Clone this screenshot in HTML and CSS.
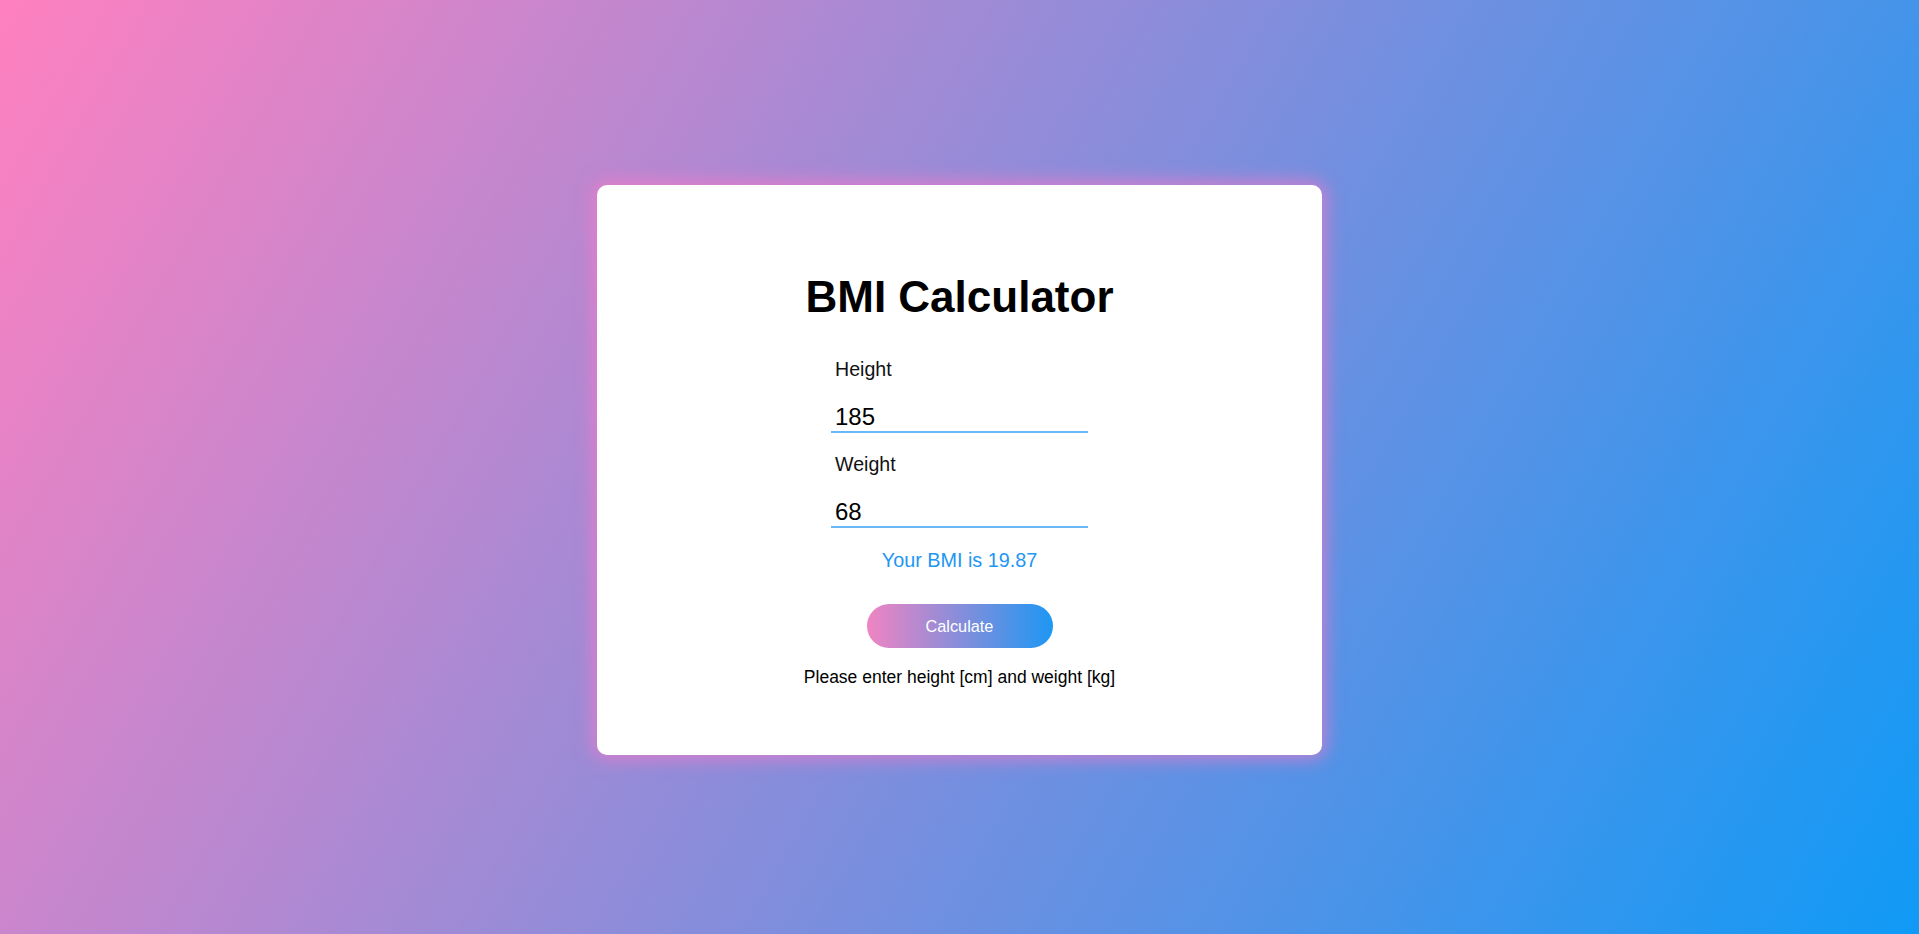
FILE: index.html
```html
<!DOCTYPE html>
<html lang="en">
<head>
<meta charset="utf-8">
<title>BMI Calculator</title>
<link rel="stylesheet" href="styles.css">
</head>
<body>
  <main class="card">
    <h1 class="title">BMI Calculator</h1>
    <form class="form" onsubmit="return false;">
      <label class="label" for="height">Height</label>
      <input class="field" id="height" type="text" value="185">
      <label class="label label-next" for="weight">Weight</label>
      <input class="field" id="weight" type="text" value="68">
    </form>
    <p class="result">Your BMI is 19.87</p>
    <button class="btn" type="button">Calculate</button>
    <p class="hint">Please enter height [cm] and weight [kg]</p>
  </main>
</body>
</html>
```

FILE: styles.css
```css
html, body {
  margin: 0;
  padding: 0;
  height: 100%;
}

body {
  font-family: "Liberation Sans", Arial, sans-serif;
  background: linear-gradient(120deg, #ff80c0 0%, #0f9af6 100%);
  display: flex;
  align-items: center;
  justify-content: center;
  overflow: hidden;
}

.card {
  box-sizing: border-box;
  width: 725px;
  margin-top: 5px;
  padding: 87px 0 68px;
  background: #ffffff;
  border-radius: 10px;
  box-shadow: 0 0 18px 4px rgba(255, 120, 200, 0.65);
  display: flex;
  flex-direction: column;
  align-items: center;
}

.title {
  margin: 0;
  font-size: 44px;
  line-height: 50px;
  font-weight: 700;
  color: #000;
  text-align: center;
}

.form {
  width: 257px;
  margin: 35px 0 0;
  display: flex;
  flex-direction: column;
}

.label {
  display: block;
  font-size: 19.6px;
  line-height: 24px;
  height: 24px;
  padding-left: 4px;
  color: #111;
}

.label-next {
  margin-top: 19px;
}

.field {
  box-sizing: border-box;
  display: block;
  width: 257px;
  height: 31px;
  margin-top: 21px;
  padding: 1px 0 0 4px;
  border: none;
  border-bottom: 2px solid #6ab8f7;
  outline: none;
  background: transparent;
  font-family: "Liberation Sans", Arial, sans-serif;
  font-size: 24px;
  line-height: 28px;
  color: #000;
}

.result {
  margin: 20px 0 0;
  font-size: 19.8px;
  line-height: 24px;
  color: #2196f3;
  text-align: center;
}

.btn {
  margin-top: 32px;
  width: 186px;
  height: 44px;
  border: none;
  border-radius: 22px;
  background: linear-gradient(to right, #f084c2, #1d97f3);
  color: #ffffff;
  font-family: "Liberation Sans", Arial, sans-serif;
  font-size: 16.3px;
  line-height: 44px;
  padding: 0;
  cursor: pointer;
}

.hint {
  margin: 19px 0 0;
  font-size: 17.5px;
  line-height: 20px;
  color: #000;
  text-align: center;
}
```
